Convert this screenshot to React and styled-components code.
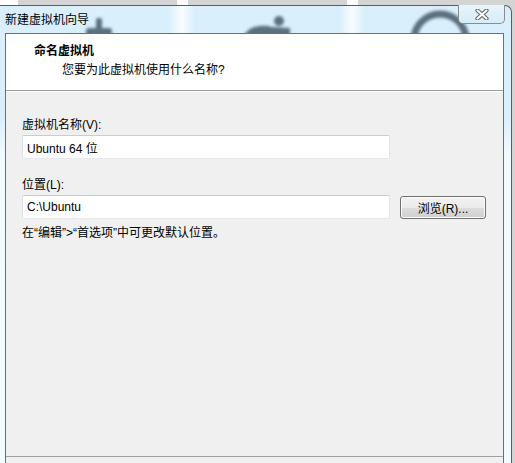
import React from "react";
import styled, { createGlobalStyle } from "styled-components";

const GlobalStyle = createGlobalStyle`
  html, body {
    margin: 0;
    padding: 0;
  }
  body {
    font-family: "Liberation Sans", "Noto Sans CJK SC", sans-serif;
    font-size: 12px;
    color: #000;
  }
`;

const FONT = `"Liberation Sans", "Noto Sans CJK SC", sans-serif`;

const Desktop = styled.div`
  width: 515px;
  height: 463px;
  overflow: hidden;
  box-sizing: border-box;
  padding-top: 5px;
  background: linear-gradient(
    90deg,
    #ffffff 0 18px,
    #d4d4d4 18px 177px,
    #fbfbfb 177px 188px,
    #d4d4d4 188px 347px,
    #fbfbfb 347px 358px,
    #d4d4d4 358px
  );
`;

const Window = styled.div`
  width: 512px;
  height: 458px;
  box-sizing: border-box;
  display: flex;
  flex-direction: column;
  border-top: 1px solid #5c5c5c;
  border-right: 1px solid #5c5c5c;
  border-top-right-radius: 7px;
  background: linear-gradient(#d9effc 0, #d9effc 110px, #f2fafe 150px, #f4fbfe 100%);
`;

const TitleBar = styled.div`
  position: relative;
  height: 27px;
  flex: none;
  display: flex;
  justify-content: space-between;
  align-items: flex-start;
  border-top-right-radius: 6px;
  background: linear-gradient(
    90deg,
    transparent 168px,
    rgba(255, 255, 255, 0.85) 182px,
    transparent 194px,
    transparent 340px,
    rgba(255, 255, 255, 0.85) 352px,
    transparent 364px
  );
`;

const Glass = styled.svg`
  position: absolute;
  left: 0;
  top: 0;
  width: 511px;
  height: 27px;
  pointer-events: none;
`;

const Title = styled.div`
  position: relative;
  margin: 6px 0 0 5px;
  line-height: 16px;
  font-family: ${FONT};
  font-size: 12px;
  color: #000;
`;

const CloseButton = styled.button`
  position: relative;
  margin: -1px 6px 0 0;
  width: 47px;
  height: 19px;
  padding: 0;
  border: 1px solid #8c8c8c;
  border-top: none;
  border-radius: 0 0 5px 5px;
  background: linear-gradient(#e7f4fc, #d7ecf8);
  display: flex;
  align-items: center;
  justify-content: center;
`;

const Client = styled.div`
  flex: 1;
  margin: 0 7px 0 5px;
  display: flex;
  flex-direction: column;
  border: 1px solid #6e6e6e;
  border-bottom: none;
  background: #f0f0f0;
`;

const Header = styled.div`
  height: 57px;
  flex: none;
  box-sizing: border-box;
  padding: 9px 0 0 28px;
  background: #ffffff;
  border-bottom: 1px solid #a0a0a0;
`;

const Heading = styled.div`
  font-family: ${FONT};
  font-size: 12px;
  font-weight: bold;
  line-height: 16px;
`;

const SubHeading = styled.div`
  margin-top: 3px;
  padding-left: 28px;
  font-family: ${FONT};
  font-size: 12px;
  line-height: 16px;
`;

const Body = styled.div`
  height: 365px;
  flex: none;
  box-sizing: border-box;
  padding: 25px 0 0 16px;
  display: flex;
  flex-direction: column;
  border-top: 1px solid #ffffff;
`;

const Label = styled.label`
  display: block;
  font-family: ${FONT};
  font-size: 12px;
  line-height: 16px;
  margin-top: ${(p) => p.$top || 0}px;
`;

const Row = styled.div`
  margin-top: 2px;
  display: flex;
  align-items: center;
  gap: 10px;
`;

const TextBox = styled.input`
  width: 368px;
  height: 24px;
  box-sizing: border-box;
  padding: 0 4px;
  border: 1px solid;
  border-color: #c9ccd3 #e0e3e8 #e6e8ec #dde0e5;
  border-radius: 2px;
  background: #ffffff;
  font-family: ${FONT};
  font-size: 12px;
  color: #000;
  outline: none;
`;

const Button = styled.button`
  width: 86px;
  height: 23px;
  padding: 0;
  border: 1px solid #707070;
  border-radius: 3px;
  background: linear-gradient(#f2f2f2 0%, #ebebeb 50%, #dddddd 51%, #cfcfcf 100%);
  box-shadow: inset 0 0 0 1px #fcfcfc;
  font-family: ${FONT};
  font-size: 12px;
  color: #000;
`;

const Hint = styled.div`
  margin-top: 6px;
  font-family: ${FONT};
  font-size: 12px;
  line-height: 16px;
`;

const Footer = styled.div`
  flex: 1;
  border-top: 1px solid #a0a0a0;
  background: #f0f0f0;
`;

function CloseGlyph() {
  return (
    <svg width="14" height="11" viewBox="0 0 14 11">
      <path
        d="M2.5 1.5 L11.5 9.5 M11.5 1.5 L2.5 9.5"
        stroke="#6b6b6b"
        strokeWidth="4.2"
        strokeLinecap="round"
      />
      <path
        d="M2.5 1.5 L11.5 9.5 M11.5 1.5 L2.5 9.5"
        stroke="#ffffff"
        strokeWidth="2"
        strokeLinecap="round"
      />
    </svg>
  );
}

function GlassBackdrop() {
  return (
    <Glass viewBox="0 0 511 27">
      <defs>
        <filter id="blur" x="-20%" y="-50%" width="140%" height="200%">
          <feGaussianBlur stdDeviation="1.6" />
        </filter>
      </defs>
      <g filter="url(#blur)" fill="#334455" opacity="0.75">
        <rect x="96" y="12" width="6" height="16" rx="2" />
        <rect x="86" y="22" width="26" height="8" rx="3" />
        <circle cx="279" cy="15" r="5" />
        <path d="M244 30 C248 20 262 18 272 21 L290 22 L290 30 Z" />
        <circle cx="440" cy="34" r="26" fill="none" stroke="#334455" strokeWidth="7" />
      </g>
    </Glass>
  );
}

export default function App() {
  return (
    <>
      <GlobalStyle />
      <Desktop>
        <Window>
          <TitleBar>
            <GlassBackdrop />
            <Title>新建虚拟机向导</Title>
            <CloseButton aria-label="关闭">
              <CloseGlyph />
            </CloseButton>
          </TitleBar>
          <Client>
            <Header>
              <Heading>命名虚拟机</Heading>
              <SubHeading>您要为此虚拟机使用什么名称?</SubHeading>
            </Header>
            <Body>
              <Label htmlFor="vm-name">虚拟机名称(V):</Label>
              <Row>
                <TextBox id="vm-name" defaultValue="Ubuntu 64 位" />
              </Row>
              <Label htmlFor="vm-location" $top={18}>
                位置(L):
              </Label>
              <Row>
                <TextBox id="vm-location" defaultValue="C:\Ubuntu" />
                <Button>浏览(R)...</Button>
              </Row>
              <Hint>在“编辑”&gt;“首选项”中可更改默认位置。</Hint>
            </Body>
            <Footer />
          </Client>
        </Window>
      </Desktop>
    </>
  );
}
